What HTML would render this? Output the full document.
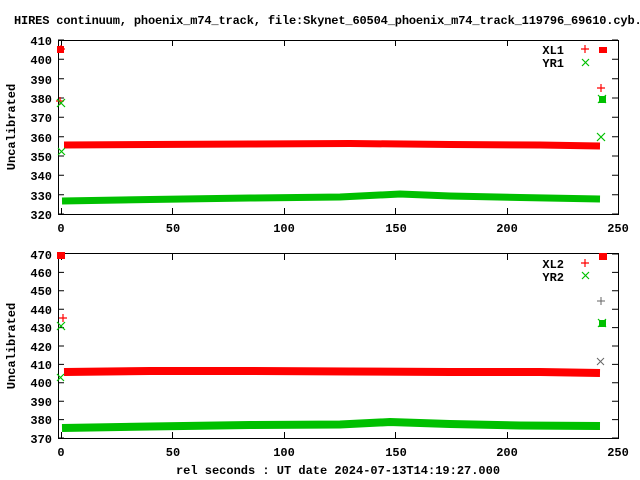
<!DOCTYPE html>
<html><head><style>
html,body{margin:0;padding:0;background:#fff;width:640px;height:480px;overflow:hidden}
svg text{font-family:"Liberation Mono",monospace;font-weight:bold;font-size:12px;fill:#000}
</style></head><body>
<svg width="640" height="480" viewBox="0 0 640 480" xmlns="http://www.w3.org/2000/svg">
<text x="14" y="24" letter-spacing="-0.15">HIRES continuum, phoenix_m74_track, file:Skynet_60504_phoenix_m74_track_119796_69610.cyb.t</text>
<rect x="58.5" y="40.5" width="560" height="174" fill="none" stroke="#000"/>
<g stroke="#000">
<path d="M58 40h6M58 59.3h6M58 78.7h6M58 98h6M58 117.3h6M58 136.7h6M58 156h6M58 175.3h6M58 194.7h6M58 214h6"/>
<path d="M618 40h-6M618 59.3h-6M618 78.7h-6M618 98h-6M618 117.3h-6M618 136.7h-6M618 156h-6M618 175.3h-6M618 194.7h-6M618 214h-6"/>
<path d="M61.5 214v-6M172.5 214v-6M284.5 214v-6M395.5 214v-6M507.5 214v-6M61.5 40v6M172.5 40v6M284.5 40v6M395.5 40v6M507.5 40v6"/>
</g>
<g text-anchor="end">
<text x="52" y="45">410</text><text x="52" y="64">400</text><text x="52" y="84">390</text><text x="52" y="103">380</text><text x="52" y="122">370</text><text x="52" y="142">360</text><text x="52" y="161">350</text><text x="52" y="180">340</text><text x="52" y="200">330</text><text x="52" y="219">320</text>
</g>
<g text-anchor="middle">
<text x="61" y="232">0</text><text x="173" y="232">50</text><text x="284" y="232">100</text><text x="396" y="232">150</text><text x="507" y="232">200</text><text x="618" y="232">250</text>
</g>
<text transform="translate(15,127) rotate(-90)" text-anchor="middle">Uncalibrated</text>
<path d="M64 145 L150 144.5 L250 144 L350 143.5 L450 144.5 L540 145 L600 146" stroke="#f00" stroke-width="7" fill="none"/>
<path d="M62 201 L150 199.5 L250 198 L340 197 L400 194 L450 196 L520 197.5 L600 199" stroke="#00c000" stroke-width="7" fill="none"/>
<g stroke="#f00" stroke-width="1.2" fill="none">
<path d="M57 49h8M61 45v8M56 101h8M60 97v8M597 88h8M601 84v8M581 49h8M585 45v8"/>
</g>
<rect x="57" y="46" width="7" height="7" fill="#f00"/>
<rect x="599" y="47" width="8" height="6" fill="#f00"/>
<g stroke="#00c000" stroke-width="1.2" fill="none">
<path d="M57 99l8 8M65 99l-8 8M598 95l8 8M606 95l-8 8M597 133l8 8M605 133l-8 8M582 59l7 7M589 59l-7 7M58 148l7 7M65 148l-7 7"/>
</g>
<rect x="599" y="96" width="7" height="7" fill="#00c000"/>
<text x="564" y="54" text-anchor="end">XL1</text>
<text x="564" y="67" text-anchor="end">YR1</text>
<rect x="58.5" y="253.5" width="560" height="185" fill="none" stroke="#000"/>
<g stroke="#000">
<path d="M58 254h6M58 272.4h6M58 290.8h6M58 309.2h6M58 327.6h6M58 346h6M58 364.4h6M58 382.8h6M58 401.2h6M58 419.6h6M58 438h6"/>
<path d="M618 254h-6M618 272.4h-6M618 290.8h-6M618 309.2h-6M618 327.6h-6M618 346h-6M618 364.4h-6M618 382.8h-6M618 401.2h-6M618 419.6h-6M618 438h-6"/>
<path d="M61.5 438v-6M172.5 438v-6M284.5 438v-6M395.5 438v-6M507.5 438v-6M61.5 254v6M172.5 254v6M284.5 254v6M395.5 254v6M507.5 254v6"/>
</g>
<g text-anchor="end">
<text x="52" y="259">470</text><text x="52" y="277">460</text><text x="52" y="295">450</text><text x="52" y="314">440</text><text x="52" y="332">430</text><text x="52" y="351">420</text><text x="52" y="369">410</text><text x="52" y="387">400</text><text x="52" y="406">390</text><text x="52" y="424">380</text><text x="52" y="443">370</text>
</g>
<g text-anchor="middle">
<text x="61" y="456">0</text><text x="173" y="456">50</text><text x="284" y="456">100</text><text x="396" y="456">150</text><text x="507" y="456">200</text><text x="618" y="456">250</text>
</g>
<text transform="translate(15,346) rotate(-90)" text-anchor="middle">Uncalibrated</text>
<text x="338" y="474" text-anchor="middle">rel seconds : UT date 2024-07-13T14:19:27.000</text>
<path d="M64 372 L150 371 L250 371 L350 371.5 L450 372 L540 372 L600 373" stroke="#f00" stroke-width="8" fill="none"/>
<path d="M62 428 L150 426.5 L250 425 L340 424.5 L390 422 L450 424 L520 425.5 L600 426" stroke="#00c000" stroke-width="8" fill="none"/>
<rect x="57" y="252" width="8" height="7" fill="#f00"/>
<rect x="599" y="253" width="8" height="7" fill="#f00"/>
<g stroke="#f00" stroke-width="1.2" fill="none">
<path d="M59 318h8M63 314v8M581 263h8M585 259v8"/>
</g>
<g stroke="#666" stroke-width="1" fill="none"><path d="M597 301h8M601 297v8M597 358l7 7M604 358l-7 7"/></g>
<g stroke="#00c000" stroke-width="1.2" fill="none">
<path d="M57 322l8 8M65 322l-8 8M598 319l8 8M606 319l-8 8M57 374l7 7M64 374l-7 7M582 272l7 7M589 272l-7 7"/>
</g>
<rect x="599" y="320" width="7" height="7" fill="#00c000"/>
<text x="564" y="268" text-anchor="end">XL2</text>
<text x="564" y="281" text-anchor="end">YR2</text>
</svg>
</body></html>
